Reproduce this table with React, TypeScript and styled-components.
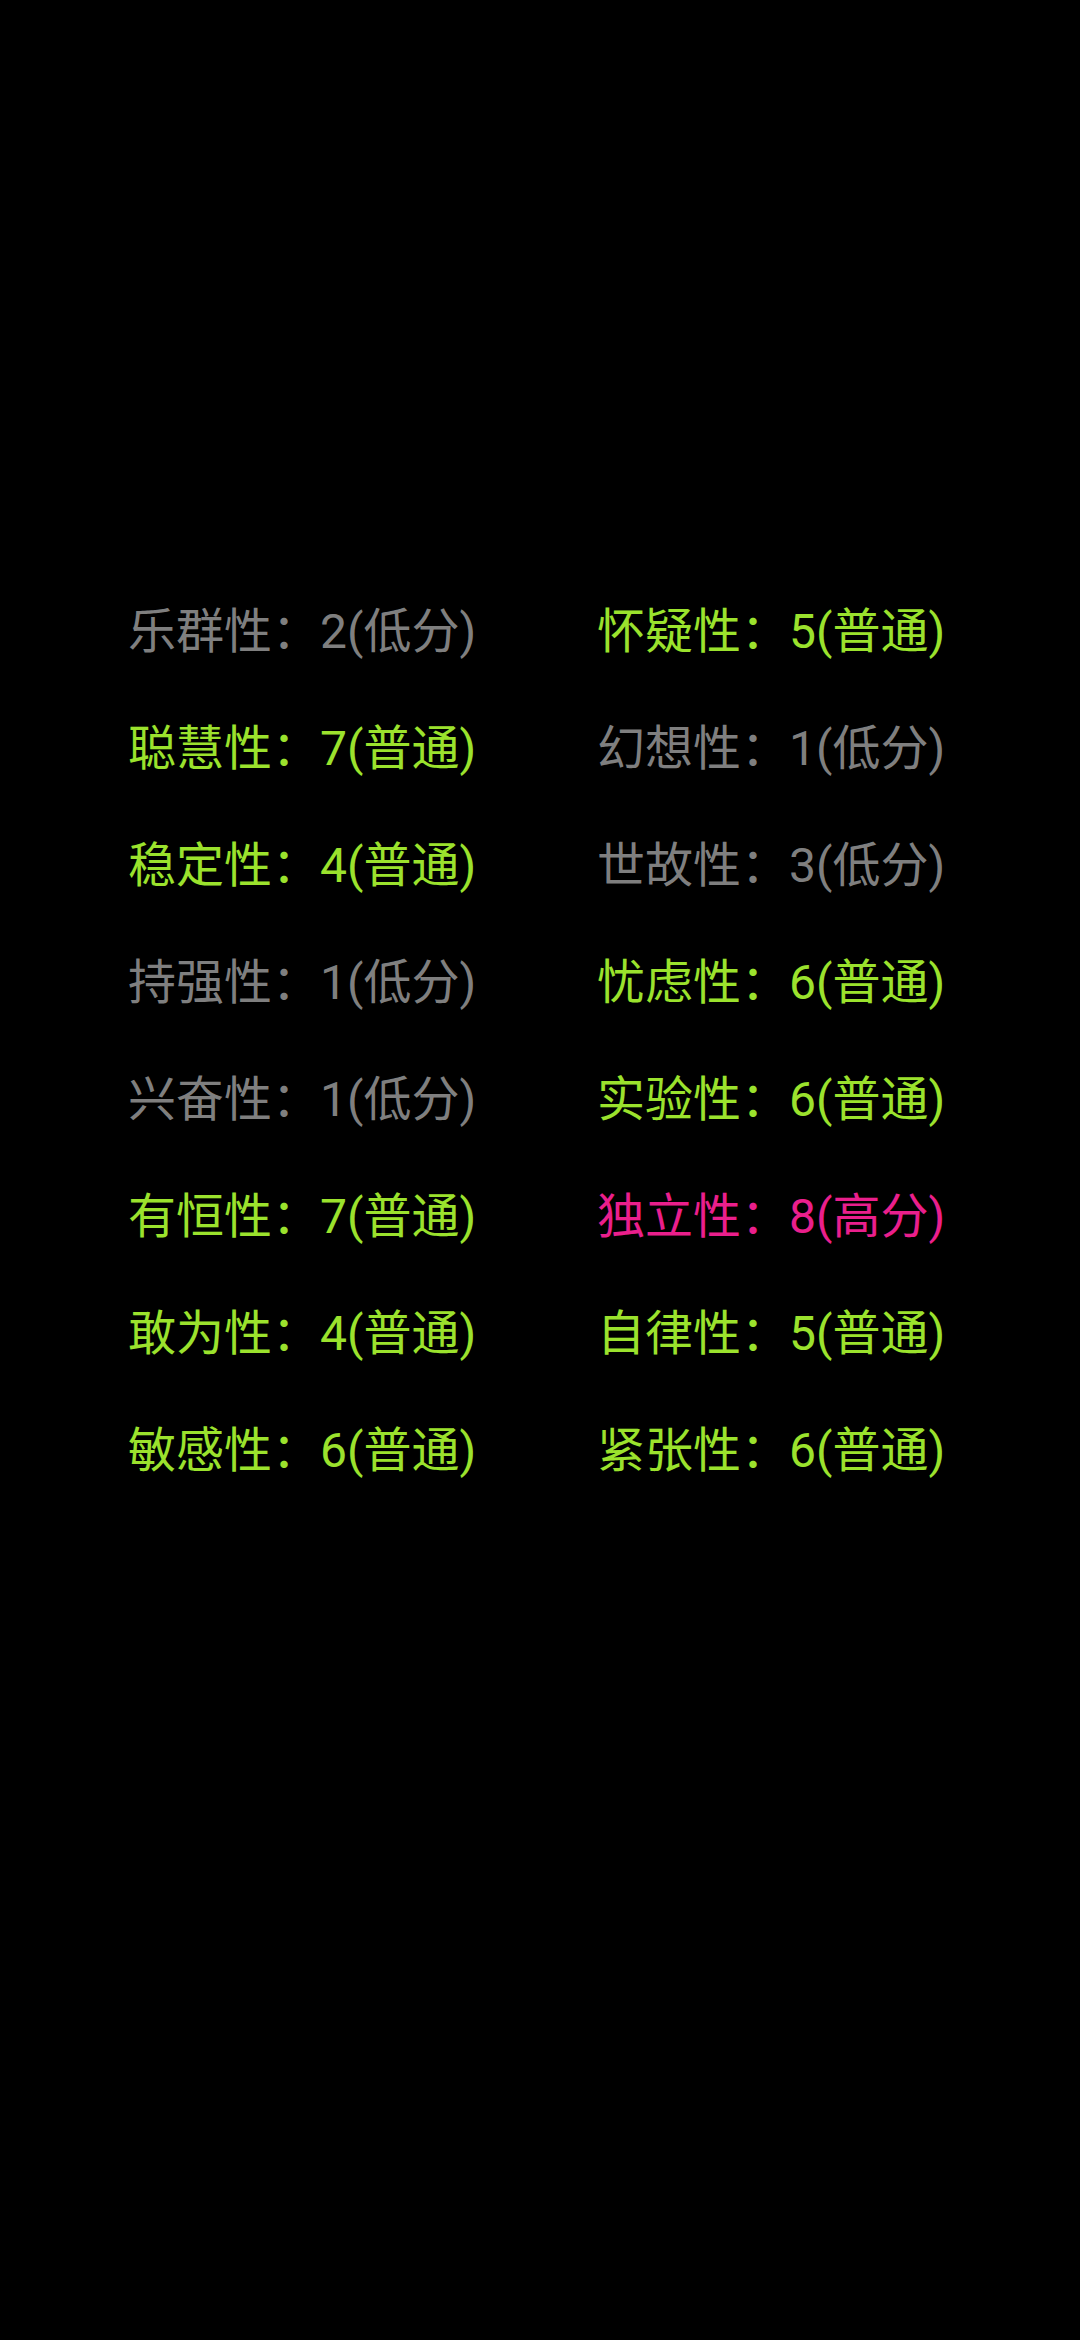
import React from 'react';
import styled, { createGlobalStyle } from 'styled-components';

const GlobalStyle = createGlobalStyle`
  html, body {
    margin: 0;
    padding: 0;
    background: #000;
  }
  body {
    font-family: Roboto, "Noto Sans CJK SC", sans-serif;
  }
`;

type Level = 'low' | 'normal' | 'high';

const colors: Record<Level, string> = {
  low: '#7f7f7f',
  normal: '#9be22d',
  high: '#ea1f8c',
};

const labels: Record<Level, string> = {
  low: '低分',
  normal: '普通',
  high: '高分',
};

const Page = styled.div`
  width: 1080px;
  height: 2340px;
  background: #000;
  box-sizing: border-box;
  padding: 573px 0 0 128px;
`;

const Grid = styled.div`
  display: grid;
  grid-template-columns: 469px 469px;
  grid-auto-rows: 117px;
`;

const Item = styled.div<{ $level: Level }>`
  font-size: 48px;
  line-height: 117px;
  white-space: nowrap;
  color: ${p => colors[p.$level]};
`;

// 16PF 因素得分
const traits: { name: string; score: number; level: Level }[] = [
  { name: '乐群性', score: 2, level: 'low' },
  { name: '怀疑性', score: 5, level: 'normal' },
  { name: '聪慧性', score: 7, level: 'normal' },
  { name: '幻想性', score: 1, level: 'low' },
  { name: '稳定性', score: 4, level: 'normal' },
  { name: '世故性', score: 3, level: 'low' },
  { name: '持强性', score: 1, level: 'low' },
  { name: '忧虑性', score: 6, level: 'normal' },
  { name: '兴奋性', score: 1, level: 'low' },
  { name: '实验性', score: 6, level: 'normal' },
  { name: '有恒性', score: 7, level: 'normal' },
  { name: '独立性', score: 8, level: 'high' },
  { name: '敢为性', score: 4, level: 'normal' },
  { name: '自律性', score: 5, level: 'normal' },
  { name: '敏感性', score: 6, level: 'normal' },
  { name: '紧张性', score: 6, level: 'normal' },
];

const App: React.FC = () => (
  <>
    <GlobalStyle />
    <Page>
      <Grid>
        {traits.map(t => (
          <Item key={t.name} $level={t.level}>
            {t.name}：{t.score}({labels[t.level]})
          </Item>
        ))}
      </Grid>
    </Page>
  </>
);

export default App;
